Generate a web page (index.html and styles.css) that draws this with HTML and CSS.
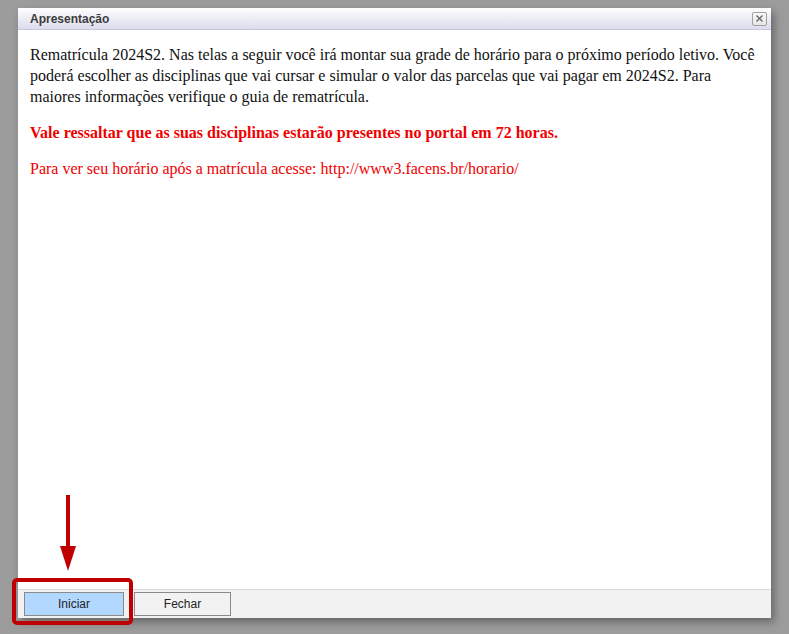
FILE: index.html
```html
<!DOCTYPE html>
<html lang="pt-BR">
<head>
<meta charset="utf-8">
<title>Apresentação</title>
<link rel="stylesheet" href="styles.css">
</head>
<body>
<div class="dialog">
  <div class="titlebar">
    <span class="title">Apresentação</span>
    <span class="close">
      <svg width="9" height="9" viewBox="0 0 9 9"><path d="M1.5 1.5 L7.5 7.5 M7.5 1.5 L1.5 7.5" stroke="#666" stroke-width="1.4" fill="none"/></svg>
    </span>
  </div>
  <div class="content">
    <p>Rematrícula 2024S2. Nas telas a seguir você irá montar sua grade de horário para o próximo período letivo. Você poderá escolher as disciplinas que vai cursar e simular o valor das parcelas que vai pagar em 2024S2. Para maiores informações verifique o guia de rematrícula.</p>
    <p class="warn">Vale ressaltar que as suas disciplinas estarão presentes no portal em 72 horas.</p>
    <p class="info">Para ver seu horário após a matrícula acesse: http://www3.facens.br/horario/</p>
  </div>
  <div class="footer">
    <button class="btn btn-primary">Iniciar</button>
    <button class="btn btn-secondary">Fechar</button>
  </div>
</div>
<div class="highlight"></div>
<svg class="arrow" width="20" height="78" viewBox="0 0 20 78">
  <path d="M10 0 V56" stroke="#c00000" stroke-width="4" fill="none"/>
  <path d="M2 51 L18 51 L10 76 Z" fill="#c00000"/>
</svg>
</body>
</html>
```

FILE: styles.css
```css
html, body {
  margin: 0;
  height: 100%;
}
body {
  background: #9c9c9c;
  padding: 8px 18px 16px 18px;
  box-sizing: border-box;
  position: relative;
  overflow: hidden;
}
.dialog {
  width: 753px;
  height: 610px;
  background: #fff;
  display: flex;
  flex-direction: column;
  box-shadow: 3px 4px 8px rgba(0, 0, 0, 0.35);
}
.titlebar {
  height: 22px;
  box-sizing: border-box;
  border-bottom: 1px solid #c8c8d8;
  background: linear-gradient(to bottom, #ffffff 0%, #f2f2f8 35%, #dcdcf0 100%);
  display: flex;
  align-items: center;
  justify-content: space-between;
  padding: 0 4px 0 12px;
}
.title {
  font-family: "Liberation Sans", Arial, sans-serif;
  font-weight: bold;
  font-size: 12px;
  color: #3c3c3c;
}
.close {
  width: 13px;
  height: 12px;
  border: 1px solid #a0a0a0;
  border-radius: 2px;
  background: linear-gradient(to bottom, #fafafa, #e6e6e6);
  display: flex;
  align-items: center;
  justify-content: center;
}
.content {
  flex: 1;
  padding: 14px 12px 0 12px;
  font-family: "Liberation Serif", "Times New Roman", serif;
  font-size: 16px;
  line-height: 21px;
  color: #111;
}
.content p {
  margin: 0 0 15px 0;
}
.warn {
  color: #f00000;
  font-weight: bold;
}
.info {
  color: #f00000;
}
.footer {
  height: 29px;
  box-sizing: border-box;
  border-top: 1px solid #d8d8d8;
  background: #f2f2f2;
  display: flex;
  align-items: flex-start;
  gap: 10px;
  padding: 2px 0 0 6px;
}
.btn {
  width: 100px;
  height: 24px;
  border: 1px solid #8a8a8a;
  background: #f2f2f2;
  font-family: "Liberation Sans", Arial, sans-serif;
  font-size: 12px;
  color: #222;
  padding: 0;
  margin: 0;
  border-radius: 0;
}
.btn-primary {
  background: #b3d8ff;
}
.btn-secondary {
  width: 97px;
}
.highlight {
  position: absolute;
  left: 12px;
  top: 578px;
  width: 121px;
  height: 47px;
  box-sizing: border-box;
  border: 4px solid #c00000;
  border-radius: 5px;
}
.arrow {
  position: absolute;
  left: 58px;
  top: 495px;
}
```
